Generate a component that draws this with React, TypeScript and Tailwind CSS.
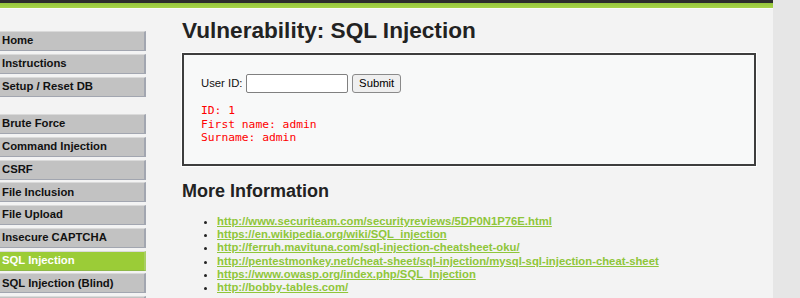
import React from "react";

const group1 = ["Home", "Instructions", "Setup / Reset DB"];
const group2 = [
  "Brute Force",
  "Command Injection",
  "CSRF",
  "File Inclusion",
  "File Upload",
  "Insecure CAPTCHA",
  "SQL Injection",
  "SQL Injection (Blind)",
  "",
];

const links = [
  "http://www.securiteam.com/securityreviews/5DP0N1P76E.html",
  "https://en.wikipedia.org/wiki/SQL_injection",
  "http://ferruh.mavituna.com/sql-injection-cheatsheet-oku/",
  "http://pentestmonkey.net/cheat-sheet/sql-injection/mysql-sql-injection-cheat-sheet",
  "https://www.owasp.org/index.php/SQL_Injection",
  "http://bobby-tables.com/",
];

function MenuItem({ label, active }: { label: string; active?: boolean }) {
  return (
    <li
      className={
        "h-[20px] mb-[2.75px] pl-[2px] flex items-center border-t border-t-[#dadada] border-r-2 border-b " +
        (active
          ? "bg-[#9bcc37] text-white border-r-[#a9cf63] border-b-[#8fb84a]"
          : "bg-[#c2c2c2] text-[#111] border-r-[#a2a6b0] border-b-[#a2a6b0]")
      }
    >
      <span className="font-bold text-[11.3px] leading-none">{label}</span>
    </li>
  );
}

export default function App() {
  return (
    <div
      className="w-[800px] h-[298px] overflow-hidden bg-[#e6e6e6] flex items-start"
      style={{ fontFamily: '"Liberation Sans", Arial, sans-serif' }}
    >
      <div className="w-[773px] min-h-[298px] bg-[#f3f3f3] flex flex-col shrink-0">
        <div className="h-[3px] shrink-0 bg-[#2c2c2c]" />
        <div className="h-[5px] shrink-0 bg-gradient-to-b from-[#94c43a] to-[#a8d44a]" />
        <div className="h-[1px] shrink-0 bg-[#fbfbfb]" />
        <div className="flex shrink-0">
          <div className="w-[146px] shrink-0 pt-[22px]">
            <ul>
              {group1.map((l) => (
                <MenuItem key={l} label={l} />
              ))}
            </ul>
            <ul className="mt-[17.5px]">
              {group2.map((l, i) => (
                <MenuItem key={i} label={l} active={l === "SQL Injection"} />
              ))}
            </ul>
          </div>
          <div className="pl-[36px] pt-[9.3px] text-[#222]">
            <h1 className="text-[22.6px] leading-[26px] font-bold text-[#222]">
              Vulnerability: SQL Injection
            </h1>
            <div className="mt-[9px] w-[574px] h-[113px] border-2 border-[#3e3e3e] bg-[#f8f9f9] pl-[17px] pt-[19px] shadow-[0_0_0_1px_#ffffff]">
              <div className="flex items-center h-[19px] text-[11.3px] text-[#111]">
                <span className="mr-[4px]">User ID:</span>
                <input
                  type="text"
                  className="w-[102px] h-[19px] bg-white border border-[#808080] rounded-[2px] mr-[3.5px] outline-none"
                />
                <button className="w-[49.5px] h-[19px] bg-[#efefef] border border-[#8a8a8a] rounded-[3px] text-[11.3px] text-black leading-none">
                  Submit
                </button>
              </div>
              <pre
                className="mt-[11px] text-[11.3px] leading-[13.3px] text-[#ff0000]"
                style={{ fontFamily: '"DejaVu Sans Mono", monospace' }}
              >
                {"ID: 1\nFirst name: admin\nSurname: admin"}
              </pre>
            </div>
            <h2 className="mt-[15px] text-[18px] leading-[21px] font-bold text-[#222]">
              More Information
            </h2>
            <ul className="mt-[13px] list-disc pl-[35px] text-[11.3px] leading-[13.1px] marker:text-[#222]">
              {links.map((l) => (
                <li key={l}>
                  <a href="#" className="font-bold text-[#8fc63a] underline underline-offset-[1px]">
                    {l}
                  </a>
                </li>
              ))}
            </ul>
          </div>
        </div>
      </div>
    </div>
  );
}
